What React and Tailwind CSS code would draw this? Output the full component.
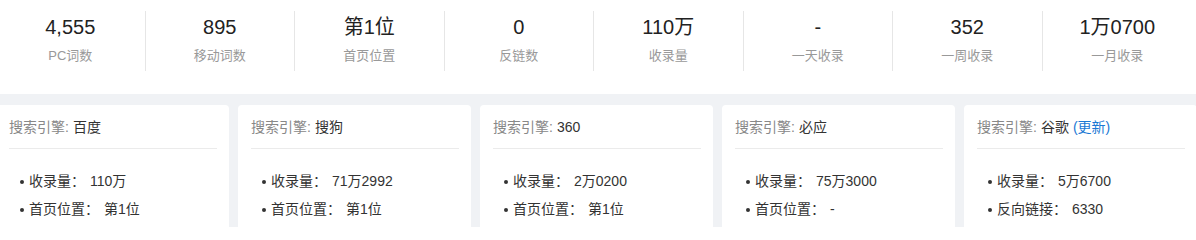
import React from "react";

const stats = [
  { value: "4,555", label: "PC词数" },
  { value: "895", label: "移动词数" },
  { value: "第1位", label: "首页位置" },
  { value: "0", label: "反链数" },
  { value: "110万", label: "收录量" },
  { value: "-", label: "一天收录" },
  { value: "352", label: "一周收录" },
  { value: "1万0700", label: "一月收录" },
];

const engines = [
  { name: "百度", rows: [["收录量：", "110万"], ["首页位置：", "第1位"]] },
  { name: "搜狗", rows: [["收录量：", "71万2992"], ["首页位置：", "第1位"]] },
  { name: "360", rows: [["收录量：", "2万0200"], ["首页位置：", "第1位"]] },
  { name: "必应", rows: [["收录量：", "75万3000"], ["首页位置：", "-"]] },
  { name: "谷歌", update: true, rows: [["收录量：", "5万6700"], ["反向链接：", "6330"]] },
];

const font = { fontFamily: '"Liberation Sans", "Noto Sans CJK SC", sans-serif' };

export default function App() {
  return (
    <div className="w-[1196px] h-[227px] overflow-hidden bg-[#f0f2f5]" style={font}>
      {/* Stats */}
      <div className="bg-white h-[94px]">
        <div className="ml-[-4px] w-[1196px] grid grid-cols-8 pt-[11px]">
          {stats.map((s, i) => (
            <div
              key={i}
              className={`h-[60px] flex flex-col items-center ${i < stats.length - 1 ? "border-r border-[#e6e6e6]" : ""}`}
            >
              <p className="mt-[2px] text-[20px] leading-[28px] text-[#222]">{s.value}</p>
              <p className="mt-[5px] text-[13px] leading-[20px] text-[#999]">{s.label}</p>
            </div>
          ))}
        </div>
      </div>

      {/* Engine cards */}
      <div className="ml-[-4px] w-[1201px] flex gap-[9px] pt-[11px]">
        {engines.map((e, i) => (
          <div key={i} className="flex-1 bg-white rounded-[4px] pl-[13px] pr-3 h-[140px]">
            <div className="h-[44px] flex items-center border-b border-[#ebebeb] text-[14px] pt-[1px]">
              <span className="text-[#888]">搜索引擎:</span>
              <span className="ml-1 text-[#333]">{e.name}</span>
              {e.update && <span className="ml-1 text-[#1a78d4]">(更新)</span>}
            </div>
            <ul className="pt-[18px] text-[14px] leading-[28px] text-[#333]">
              {e.rows.map((r, j) => (
                <li key={j} className="flex items-center pl-[11px]">
                  <span className="w-[4px] h-[4px] rounded-full bg-[#333] mr-[5px] mt-[1px]"></span>
                  {r[0]}
                  <span className="ml-[5px]">{r[1]}</span>
                </li>
              ))}
            </ul>
          </div>
        ))}
      </div>
    </div>
  );
}
